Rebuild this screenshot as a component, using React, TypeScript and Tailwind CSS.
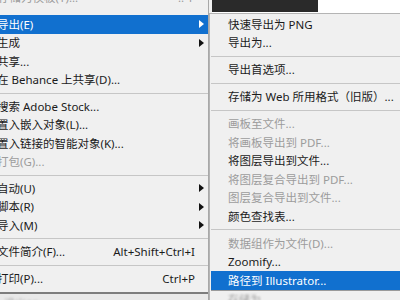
const FONT = { fontFamily: '"Noto Sans", "Noto Sans CJK SC", sans-serif' };

type Item =
  | { sep: true }
  | { sep?: false; label: string; shortcut?: string; sub?: boolean; dim?: boolean; active?: boolean };

const mainItems: Item[] = [
  { label: "导出(E)", sub: true, active: true },
  { label: "生成", sub: true },
  { label: "共享..." },
  { label: "在 Behance 上共享(D)..." },
  { sep: true },
  { label: "搜索 Adobe Stock..." },
  { label: "置入嵌入对象(L)..." },
  { label: "置入链接的智能对象(K)..." },
  { label: "打包(G)...", dim: true },
  { sep: true },
  { label: "自动(U)", sub: true },
  { label: "脚本(R)", sub: true },
  { label: "导入(M)", sub: true },
  { sep: true },
  { label: "文件简介(F)...", shortcut: "Alt+Shift+Ctrl+I" },
  { sep: true },
  { label: "打印(P)...", shortcut: "Ctrl+P" },
];

const subItems: Item[] = [
  { label: "快速导出为 PNG" },
  { label: "导出为..." },
  { sep: true },
  { label: "导出首选项..." },
  { sep: true },
  { label: "存储为 Web 所用格式（旧版）..." },
  { sep: true },
  { label: "画板至文件...", dim: true },
  { label: "将画板导出到 PDF...", dim: true },
  { label: "将图层导出到文件..." },
  { label: "将图层复合导出到 PDF...", dim: true },
  { label: "图层复合导出到文件...", dim: true },
  { label: "颜色查找表..." },
  { sep: true },
  { label: "数据组作为文件(D)...", dim: true },
  { label: "Zoomify..." },
  { label: "路径到 Illustrator...", active: true },
];

function Arrow({ white }: { white?: boolean }) {
  return (
    <svg width="5" height="8" viewBox="0 0 5 8" className="shrink-0">
      <path d="M0 0 L5 4 L0 8 Z" fill={white ? "#ffffff" : "#111111"} />
    </svg>
  );
}

function MainRow({ item }: { item: Item }) {
  if (item.sep) {
    return (
      <div className="h-[8px] flex items-center">
        <div className="w-full h-px bg-[#c6c6c6]" />
      </div>
    );
  }
  return (
    <div
      className={`h-[18.5px] flex items-center pr-[4px] text-[11.5px] ${
        item.active ? "bg-[#1170cf] text-white" : item.dim ? "text-[#9c9c9c]" : "text-[#1b1b1b]"
      }`}
    >
      <span className="ml-[-3px] flex-1 whitespace-nowrap">{item.label}</span>
      {item.shortcut && <span className="mr-[9px] whitespace-nowrap">{item.shortcut}</span>}
      {item.sub && <Arrow white={item.active} />}
    </div>
  );
}

function SubRow({ item }: { item: Item }) {
  if (item.sep) {
    return (
      <div className="h-[8.5px] flex items-center">
        <div className="w-full h-px bg-[#c6c6c6]" />
      </div>
    );
  }
  return (
    <div
      className={`h-[18.5px] flex items-center pl-[17px] text-[11.5px] whitespace-nowrap ${
        item.active ? "bg-[#1170cf] text-white" : item.dim ? "text-[#9c9c9c]" : "text-[#1b1b1b]"
      }`}
    >
      {item.label}
    </div>
  );
}

export default function App() {
  return (
    <div className="w-[400px] h-[300px] overflow-hidden flex bg-[#f0f0f0]" style={FONT}>
      {/* main file menu */}
      <div className="w-[209px] shrink-0 flex flex-col border-r border-[#a8a8a8]">
        <div className="h-[15px] relative overflow-hidden text-[11.5px] text-[#9c9c9c]">
          <span className="absolute left-[-2px] top-[-11px] whitespace-nowrap">存储为模板(Y)...</span>
          <span className="absolute left-[178px] top-[-11px] whitespace-nowrap">.. Y</span>
        </div>
        {mainItems.map((it, i) => (
          <MainRow key={i} item={it} />
        ))}
        <div className="h-[4px]" />
        <div className="h-[2px] bg-[#7d7d7d]" />
        <div className="flex-1 bg-[#e9e9e9] relative overflow-hidden">
          <span className="absolute left-[4px] top-[2px] text-[11px] text-[#b0b0b0] whitespace-nowrap blur-[1px]">
            退出(X)
          </span>
        </div>
      </div>

      {/* export submenu */}
      <div className="flex-1 flex flex-col">
        <div className="h-[13px] flex bg-white">
          <div className="w-[3px] bg-[#f0f0f0]" />
          <div className="w-[106px] h-[12px] bg-[#2a2a2a]" />
        </div>
        <div className="flex-1 flex flex-col border-l border-t border-[#b4b4b4] pl-[1px] pt-[1px]">
          {subItems.map((it, i) => (
            <SubRow key={i} item={it} />
          ))}
          <div className="flex-1 relative overflow-hidden border-t border-[#9a9a9a]">
            <span className="absolute left-[17px] top-[1px] text-[11px] text-[#a0a0a0] whitespace-nowrap blur-[1px]">
              存储为...
            </span>
          </div>
        </div>
      </div>
    </div>
  );
}
